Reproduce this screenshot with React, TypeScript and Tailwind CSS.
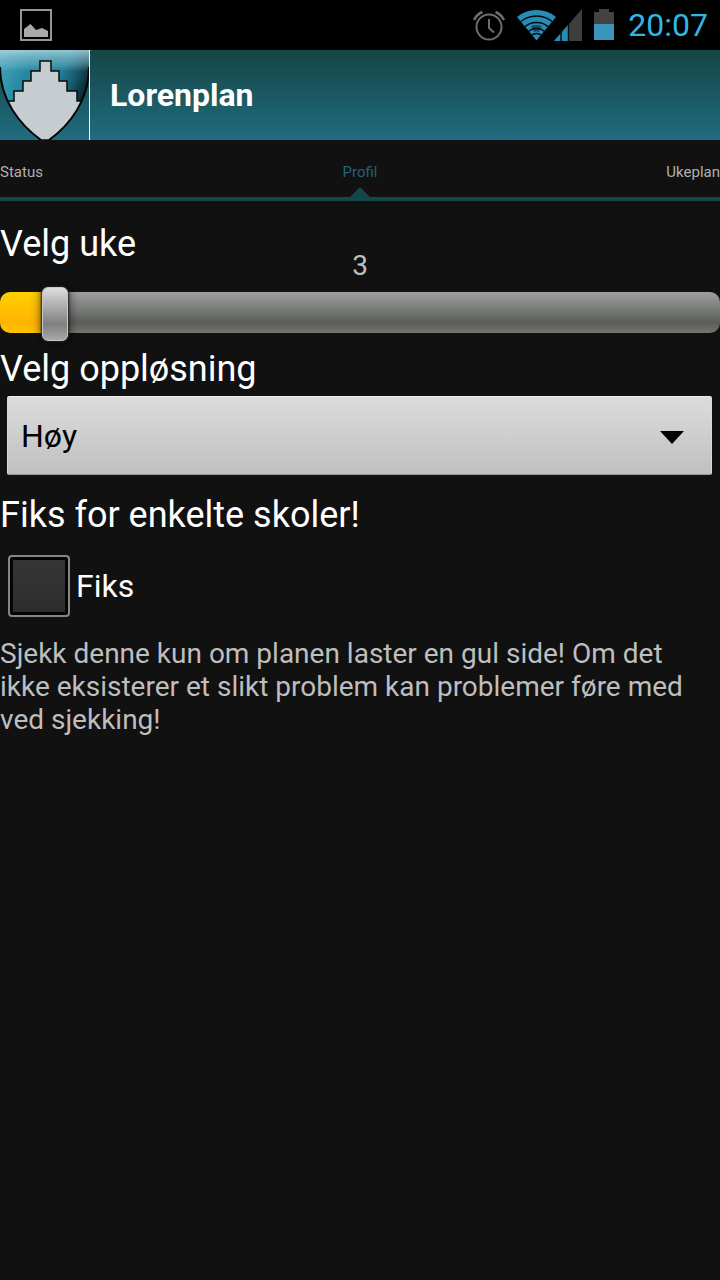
import { useState } from "react";
import type { CSSProperties } from "react";

const MAX_STEP = 49;

function StatusBar() {
  return (
    <div className="flex h-[50px] items-center justify-between bg-black pr-3 pl-5">
      <svg width="32" height="32" viewBox="0 0 32 32" aria-hidden="true">
        <rect x="1" y="1" width="30" height="30" fill="none" stroke="#969696" strokeWidth="2" />
        <path d="M4 28V20L10.500 15L16 21L22 19L28 22V28Z" fill="#aaa" />
      </svg>
      <div className="flex items-center">
        <svg className="mr-3" width="32" height="32" viewBox="0 0 32 32" fill="none" stroke="#6e6e6e" aria-hidden="true">
          <circle cx="16" cy="18" r="12.500" strokeWidth="2" />
          <path d="M16 10V19L21 23.500" strokeWidth="2" />
          <path d="M1 11Q4 5 9.500 3M31 11Q28 5 22.500 3" strokeWidth="2.500" />
        </svg>
        <svg width="66" height="34" viewBox="0 0 66 34" aria-hidden="true">
          <defs>
            <clipPath id="wifi">
              <path d="M0 9A31 31 0 0 1 39 9L19.500 32.500Z" />
            </clipPath>
          </defs>
          <g clipPath="url(#wifi)">
            <rect width="40" height="34" fill="#288cb4" />
            <path d="M14 18Q19.500 16 25 18L22 24Q19.500 23 17 24Z" fill="#164e66" />
            <g fill="none" stroke="#030b10" strokeWidth="1.500">
              <circle cx="19.500" cy="33" r="25" />
              <circle cx="19.500" cy="33" r="18.500" />
              <circle cx="19.500" cy="33" r="12.500" />
              <circle cx="19.500" cy="33" r="7.500" />
            </g>
          </g>
          <path d="M65 1V33H37Z" fill="#3e3e3e" />
          <path d="M51 17V33H37Z" fill="#288cb4" />
          <path d="M44 22V33M51.500 15V33" stroke="#051017" strokeWidth="1.500" />
        </svg>
        <svg className="ml-[11px]" width="20" height="32" viewBox="0 0 20 32" aria-hidden="true">
          <path d="M0 3H5V0H15V3H20V15H0Z" fill="#424242" />
          <rect y="15" width="20" height="16" fill="#3b94b9" />
        </svg>
        <time className="ml-[14px] text-[32px] leading-[50px] text-[#33b5e5]">20:07</time>
      </div>
    </div>
  );
}

function Crest() {
  return (
    <svg width="89" height="90" viewBox="0 0 89 90" className="shrink-0" aria-hidden="true">
      <defs>
        <linearGradient id="field" gradientUnits="userSpaceOnUse" x1="0" y1="10" x2="89" y2="45">
          <stop offset="0" stopColor="#48a3b8" />
          <stop offset=".3" stopColor="#2389a2" />
          <stop offset=".65" stopColor="#1f7d96" />
          <stop offset=".8" stopColor="#17586a" />
          <stop offset="1" stopColor="#04161c" />
        </linearGradient>
        <linearGradient id="gloss" x1="0" y1="0" x2="0" y2="1">
          <stop offset="0" stopColor="#bbdce5" stopOpacity=".75" />
          <stop offset=".5" stopColor="#8fc4d2" stopOpacity=".5" />
          <stop offset="1" stopColor="#bbdce5" stopOpacity="0" />
        </linearGradient>
        <clipPath id="shield">
          <path d="M0 0H89V17C89 50 70 75 50 90H40C20 75 0 50 0 17Z" />
        </clipPath>
      </defs>
      <g clipPath="url(#shield)">
        <rect width="89" height="90" fill="url(#field)" />
        <rect width="89" height="21" fill="url(#gloss)" />
        <path
          d="M0 51H14V41H23V31H31V21H40V11H51V21H59V31H67V41H77V51H89V90H0Z"
          fill="#c5cdd0"
          stroke="#0a0a0a"
          strokeWidth="1.500"
        />
      </g>
      <path d="M0 17C0 50 20 75 41 90M89 17C89 50 70 75 49 90" fill="none" stroke="#050505" strokeWidth="2" />
    </svg>
  );
}

function Tabs() {
  return (
    <nav className="border-b-4 border-[#15474a] text-[15px] leading-[24px] text-[#b0b0b0]">
      <ul className="grid h-[57px] grid-cols-3 pt-5">
        <li>
          <a href="#status">Status</a>
        </li>
        <li className="flex flex-col items-center justify-between">
          <a href="#profil" aria-current="page" className="text-[#1f6478]">
            Profil
          </a>
          <svg width="20" height="10" viewBox="0 0 20 10" aria-hidden="true">
            <path d="M0 10L10 0L20 10Z" fill="#15474a" />
          </svg>
        </li>
        <li className="text-right">
          <a href="#ukeplan">Ukeplan</a>
        </li>
      </ul>
    </nav>
  );
}

export default function App() {
  const [week, setWeek] = useState(3);
  const [resolution, setResolution] = useState("Høy");
  const [fix, setFix] = useState(false);
  const ratio = week / MAX_STEP;
  const fill = { "--fill": `calc(${ratio * 100}% + ${13 - ratio * 26}px)` } as CSSProperties;

  return (
    <div className="min-h-screen bg-[#111] font-['Roboto',sans-serif] text-white">
      <StatusBar />
      <header className="flex h-[90px] items-center bg-linear-to-b from-[#154545] to-[#206c80]">
        <Crest />
        <div className="h-full w-px bg-white" />
        <h1 className="ml-5 text-[32px] font-bold">Lorenplan</h1>
      </header>
      <Tabs />
      <main>
        <label htmlFor="week" className="block pt-[22px] text-[36px] leading-[42px]">
          Velg uke
        </label>
        <output htmlFor="week" className="-mt-4 block text-center text-[28px] leading-[33px] text-[#bebebe]">
          {week}
        </output>
        <input
          id="week"
          type="range"
          min={0}
          max={MAX_STEP}
          value={week}
          onChange={(e) => setWeek(Number(e.target.value))}
          style={fill}
          className="mt-[3px] block h-[54px] w-full appearance-none bg-transparent [&::-webkit-slider-runnable-track]:h-[41px] [&::-webkit-slider-runnable-track]:rounded-[10px] [&::-webkit-slider-runnable-track]:[background:linear-gradient(#ffd000,#ffb400_75%,#ffc400)_0_0/var(--fill)_100%_no-repeat,linear-gradient(#9f9f9f,#7b7d7a_40%,#5a5d58_75%,#737572)] [&::-webkit-slider-thumb]:-mt-[5px] [&::-webkit-slider-thumb]:h-[54px] [&::-webkit-slider-thumb]:w-[26px] [&::-webkit-slider-thumb]:appearance-none [&::-webkit-slider-thumb]:rounded-[6px] [&::-webkit-slider-thumb]:border [&::-webkit-slider-thumb]:border-[#c8c8c8] [&::-webkit-slider-thumb]:bg-linear-to-b [&::-webkit-slider-thumb]:from-[#dedede] [&::-webkit-slider-thumb]:via-[#808080] [&::-webkit-slider-thumb]:via-70% [&::-webkit-slider-thumb]:to-[#a8a8a8] [&::-webkit-slider-thumb]:shadow-[0_0_2px_1px_#222,0_0_10px_2px_rgba(0,0,0,0.5)]"
        />
        <label htmlFor="resolution" className="block pt-[9px] text-[36px] leading-[42px]">
          Velg oppløsning
        </label>
        <div className="relative mr-2 ml-[7px] mt-[6px]">
          <select
            id="resolution"
            value={resolution}
            onChange={(e) => setResolution(e.target.value)}
            className="block h-[79px] w-full appearance-none rounded-[2px] border border-t-[#ededed] border-r-[#d8d8d8] border-b-[#999] border-l-[#d8d8d8] bg-linear-to-b from-[#dcdcdc] to-[#c0c0c0] pl-[13px] text-[32px] text-black"
          >
            <option>Høy</option>
            <option>Middels</option>
            <option>Lav</option>
          </select>
          <svg
            className="pointer-events-none absolute top-[35px] right-[28px]"
            width="24"
            height="13"
            viewBox="0 0 24 13"
            aria-hidden="true"
          >
            <path d="M0 0H24L12 13Z" fill="#000" />
          </svg>
        </div>
        <h2 className="mt-[19px] text-[36px] leading-[42px]">Fiks for enkelte skoler!</h2>
        <div className="mt-[19px] flex items-center gap-[6px] pl-2">
          <input
            id="fix"
            type="checkbox"
            checked={fix}
            onChange={(e) => setFix(e.target.checked)}
            className="size-[62px] appearance-none rounded-[4px] border-2 border-[#858585] bg-linear-to-b from-[#363636] to-[#2d2d2d] shadow-[inset_0_0_0_3px_#050505] checked:from-[#33b5e5] checked:to-[#288cb4]"
          />
          <label htmlFor="fix" className="text-[32px] leading-[40px]">
            Fiks
          </label>
        </div>
        <p className="mt-5 pr-4 text-[28px] leading-[33px] text-[#bebebe]">
          Sjekk denne kun om planen laster en gul side! Om det ikke eksisterer et slikt problem kan problemer føre med
          ved sjekking!
        </p>
      </main>
    </div>
  );
}
